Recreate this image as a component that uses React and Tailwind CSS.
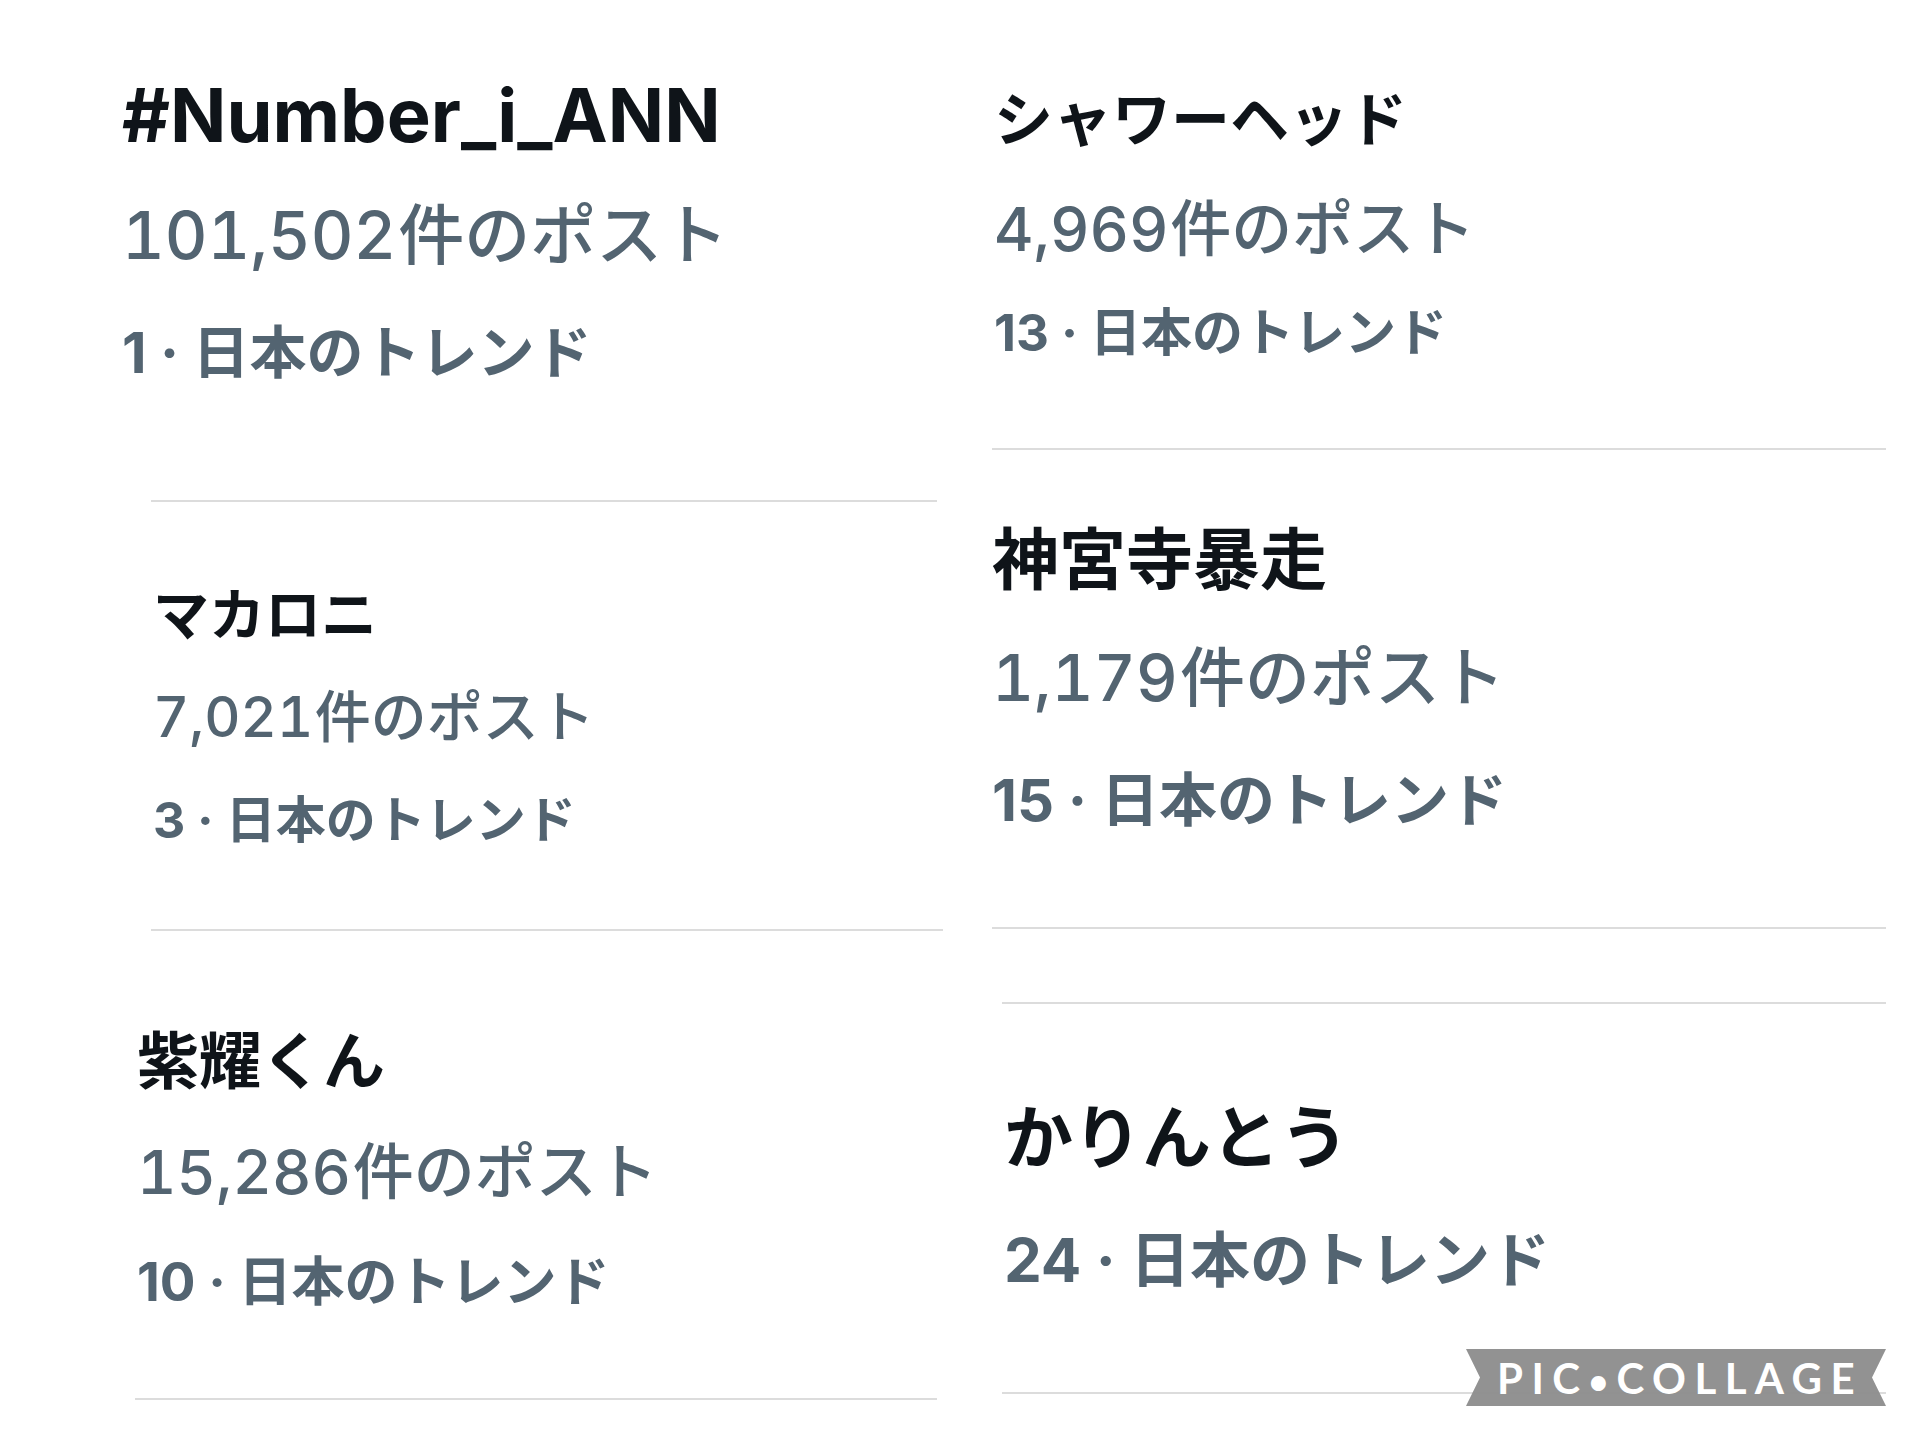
import React from "react";

// one trend entry: title, optional post count, rank line
const Cell = ({ pad, title, titleCls, count, postsCls, rank, rankCls }) => {
  return (
    <div className={pad}>
      <div className={`leading-none font-bold whitespace-nowrap ${titleCls}`}>{title}</div>
      {count && (
        <div className={`leading-none font-medium text-[#536471] whitespace-nowrap ${postsCls}`}>
          <span className="tabular-nums mr-[0.03em]">{count}</span>件のポスト
        </div>
      )}
      <div className={`leading-none font-bold text-[#536471] whitespace-nowrap ${rankCls}`}>{rank}</div>
    </div>
  );
};

const Divider = ({ cls }) => <div className={`h-[2px] bg-[#dcdcdc] ${cls}`} />;

const Watermark = () => (
  <div className="absolute left-[1466px] top-[1349px] w-[420px] h-[57px] bg-[#8c8c8c]/95 [clip-path:polygon(0_0,100%_0,calc(100%-14px)_50%,100%_100%,0_100%,14px_50%)] flex items-center justify-center">
    <span className="font-['Lato','Liberation_Sans',sans-serif] font-bold text-[42px] leading-none tracking-[0.2em] text-white pl-[8px]">
      PIC<span className="text-[34px]">•</span>COLLAGE
    </span>
  </div>
);

export default function App() {
  return (
    <div className="relative w-[1920px] h-[1440px] bg-white overflow-hidden grid grid-cols-[960px_960px] text-[#0f1419] font-['Inter','Noto_Sans_CJK_JP',sans-serif]">
      {/* left column */}
      <div className="flex flex-col">
        <Cell
          pad="pl-[122px]"
          title="#Number_i_ANN"
          titleCls="text-[74px] mt-[78px]"
          count="101,502"
          postsCls="text-[66px] mt-[50px]"
          rank="1 · 日本のトレンド"
          rankCls="text-[57px] mt-[56px]"
        />
        <Divider cls="mt-[119px] ml-[151px] w-[786px]" />
        <Cell
          pad="pl-[153px]"
          title="マカロニ"
          titleCls="text-[56px] mt-[85px]"
          count="7,021"
          postsCls="text-[56px] mt-[46px]"
          rank="3 · 日本のトレンド"
          rankCls="text-[50px] mt-[50px]"
        />
        <Divider cls="mt-[84px] ml-[151px] w-[792px]" />
        <Cell
          pad="pl-[137px]"
          title="紫耀くん"
          titleCls="text-[62px] mt-[100px]"
          count="15,286"
          postsCls="text-[61px] mt-[49px]"
          rank="10 · 日本のトレンド"
          rankCls="text-[53px] mt-[53px]"
        />
        <Divider cls="mt-[89px] ml-[135px] w-[802px]" />
      </div>

      {/* right column */}
      <div className="flex flex-col">
        <Cell
          pad="pl-[34px]"
          title="シャワーヘッド"
          titleCls="text-[59px] mt-[90px]"
          count="4,969"
          postsCls="text-[61px] mt-[50px]"
          rank="13 · 日本のトレンド"
          rankCls="text-[51px] mt-[47px]"
        />
        <Divider cls="mt-[90px] ml-[32px] w-[894px]" />
        <Cell
          pad="pl-[32px]"
          title="神宮寺暴走"
          titleCls="text-[67px] mt-[76px]"
          count="1,179"
          postsCls="text-[65px] mt-[52px]"
          rank="15 · 日本のトレンド"
          rankCls="text-[58px] mt-[61px]"
        />
        <Divider cls="mt-[98px] ml-[32px] w-[894px]" />
        <Divider cls="mt-[73px] ml-[42px] w-[884px]" />
        <Cell
          pad="pl-[44px]"
          title="かりんとう"
          titleCls="text-[69px] mt-[100px]"
          rank="24 · 日本のトレンド"
          rankCls="text-[60px] mt-[57px]"
        />
        <Divider cls="mt-[102px] ml-[42px] w-[884px]" />
      </div>

      <Watermark />
    </div>
  );
}
